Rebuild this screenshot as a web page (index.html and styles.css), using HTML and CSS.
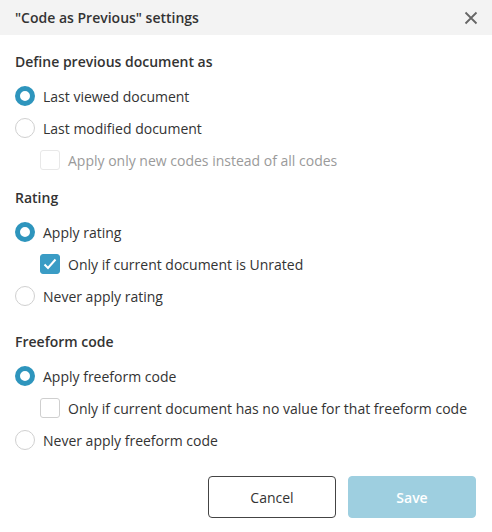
FILE: index.html
```html
<!DOCTYPE html>
<html>
<head>
<meta charset="utf-8">
<link rel="stylesheet" href="styles.css">
</head>
<body>
<div class="dialog">
  <div class="header">
    <span class="title">"Code as Previous" settings</span>
    <svg class="close" width="14" height="14" viewBox="0 0 14 14"><path d="M1.5 1.5 L12.5 12.5 M12.5 1.5 L1.5 12.5" stroke="#666" stroke-width="1.8" fill="none"/></svg>
  </div>
  <div class="body">
    <div class="section first">
      <div class="heading">Define previous document as</div>
      <div class="row"><span class="radio on"></span><span class="label">Last viewed document</span></div>
      <div class="row"><span class="radio"></span><span class="label">Last modified document</span></div>
      <div class="row sub disabled"><span class="check"></span><span class="label">Apply only new codes instead of all codes</span></div>
    </div>
    <div class="section second">
      <div class="heading">Rating</div>
      <div class="row"><span class="radio on"></span><span class="label">Apply rating</span></div>
      <div class="row sub"><span class="check on"><svg width="14" height="12" viewBox="0 0 14 12"><path d="M1.5 6.5 L5 10 L12.5 1.5" stroke="#fff" stroke-width="2" fill="none"/></svg></span><span class="label">Only if current document is Unrated</span></div>
      <div class="row"><span class="radio"></span><span class="label">Never apply rating</span></div>
    </div>
    <div class="section">
      <div class="heading">Freeform code</div>
      <div class="row"><span class="radio on"></span><span class="label">Apply freeform code</span></div>
      <div class="row sub"><span class="check"></span><span class="label">Only if current document has no value for that freeform code</span></div>
      <div class="row"><span class="radio"></span><span class="label">Never apply freeform code</span></div>
    </div>
  </div>
  <div class="footer">
    <button class="btn cancel">Cancel</button>
    <button class="btn save">Save</button>
  </div>
</div>
</body>
</html>
```
FILE: styles.css
```css
html, body {
  margin: 0;
  padding: 0;
  background: #fff;
}
.dialog {
  width: 492px;
  height: 532px;
  font-family: "Open Sans", "Noto Sans", sans-serif;
  color: #333;
  font-size: 14px;
}
.header {
  height: 35px;
  background: #f3f3f3;
  display: flex;
  align-items: center;
  justify-content: space-between;
  padding: 0 14px 0 15px;
}
.title {
  font-weight: 600;
  font-size: 14px;
  color: #333;
}
.close {
  display: block;
}
.body {
  padding: 17px 0 0 15px;
}
.section.first {
  margin-bottom: 12px;
}
.section.second {
  margin-bottom: 20px;
}
.heading {
  font-weight: 600;
  height: 20px;
  line-height: 20px;
  margin-bottom: 8px;
}
.row {
  display: flex;
  align-items: center;
  height: 32px;
}
.row .label {
  margin-left: 8px;
}
.row.sub {
  padding-left: 25px;
}
.radio {
  width: 20px;
  height: 20px;
  box-sizing: border-box;
  border-radius: 50%;
  border: 1px solid #d0d0d0;
  background: #fff;
}
.radio.on {
  border: 5px solid #2e95bd;
}
.check {
  width: 20px;
  height: 20px;
  box-sizing: border-box;
  border-radius: 3px;
  border: 1px solid #cfcfcf;
  background: #fff;
  display: flex;
  align-items: center;
  justify-content: center;
}
.check.on {
  background: #3a9cc5;
  border-color: #3a9cc5;
}
.disabled .check {
  border-color: #e8e8e8;
}
.disabled .label {
  color: #9a9a9a;
}
.footer {
  display: flex;
  justify-content: flex-end;
  gap: 12px;
  padding: 20px 16px 0 0;
}
.btn {
  width: 128px;
  height: 42px;
  border-radius: 4px;
  font-family: "Open Sans", "Noto Sans", sans-serif;
  font-size: 14px;
  box-sizing: border-box;
}
.cancel {
  background: #fff;
  border: 1px solid #444;
  color: #333;
}
.save {
  background: #9ecfe0;
  border: 1px solid #9ecfe0;
  color: #fff;
  font-weight: 600;
}
```
